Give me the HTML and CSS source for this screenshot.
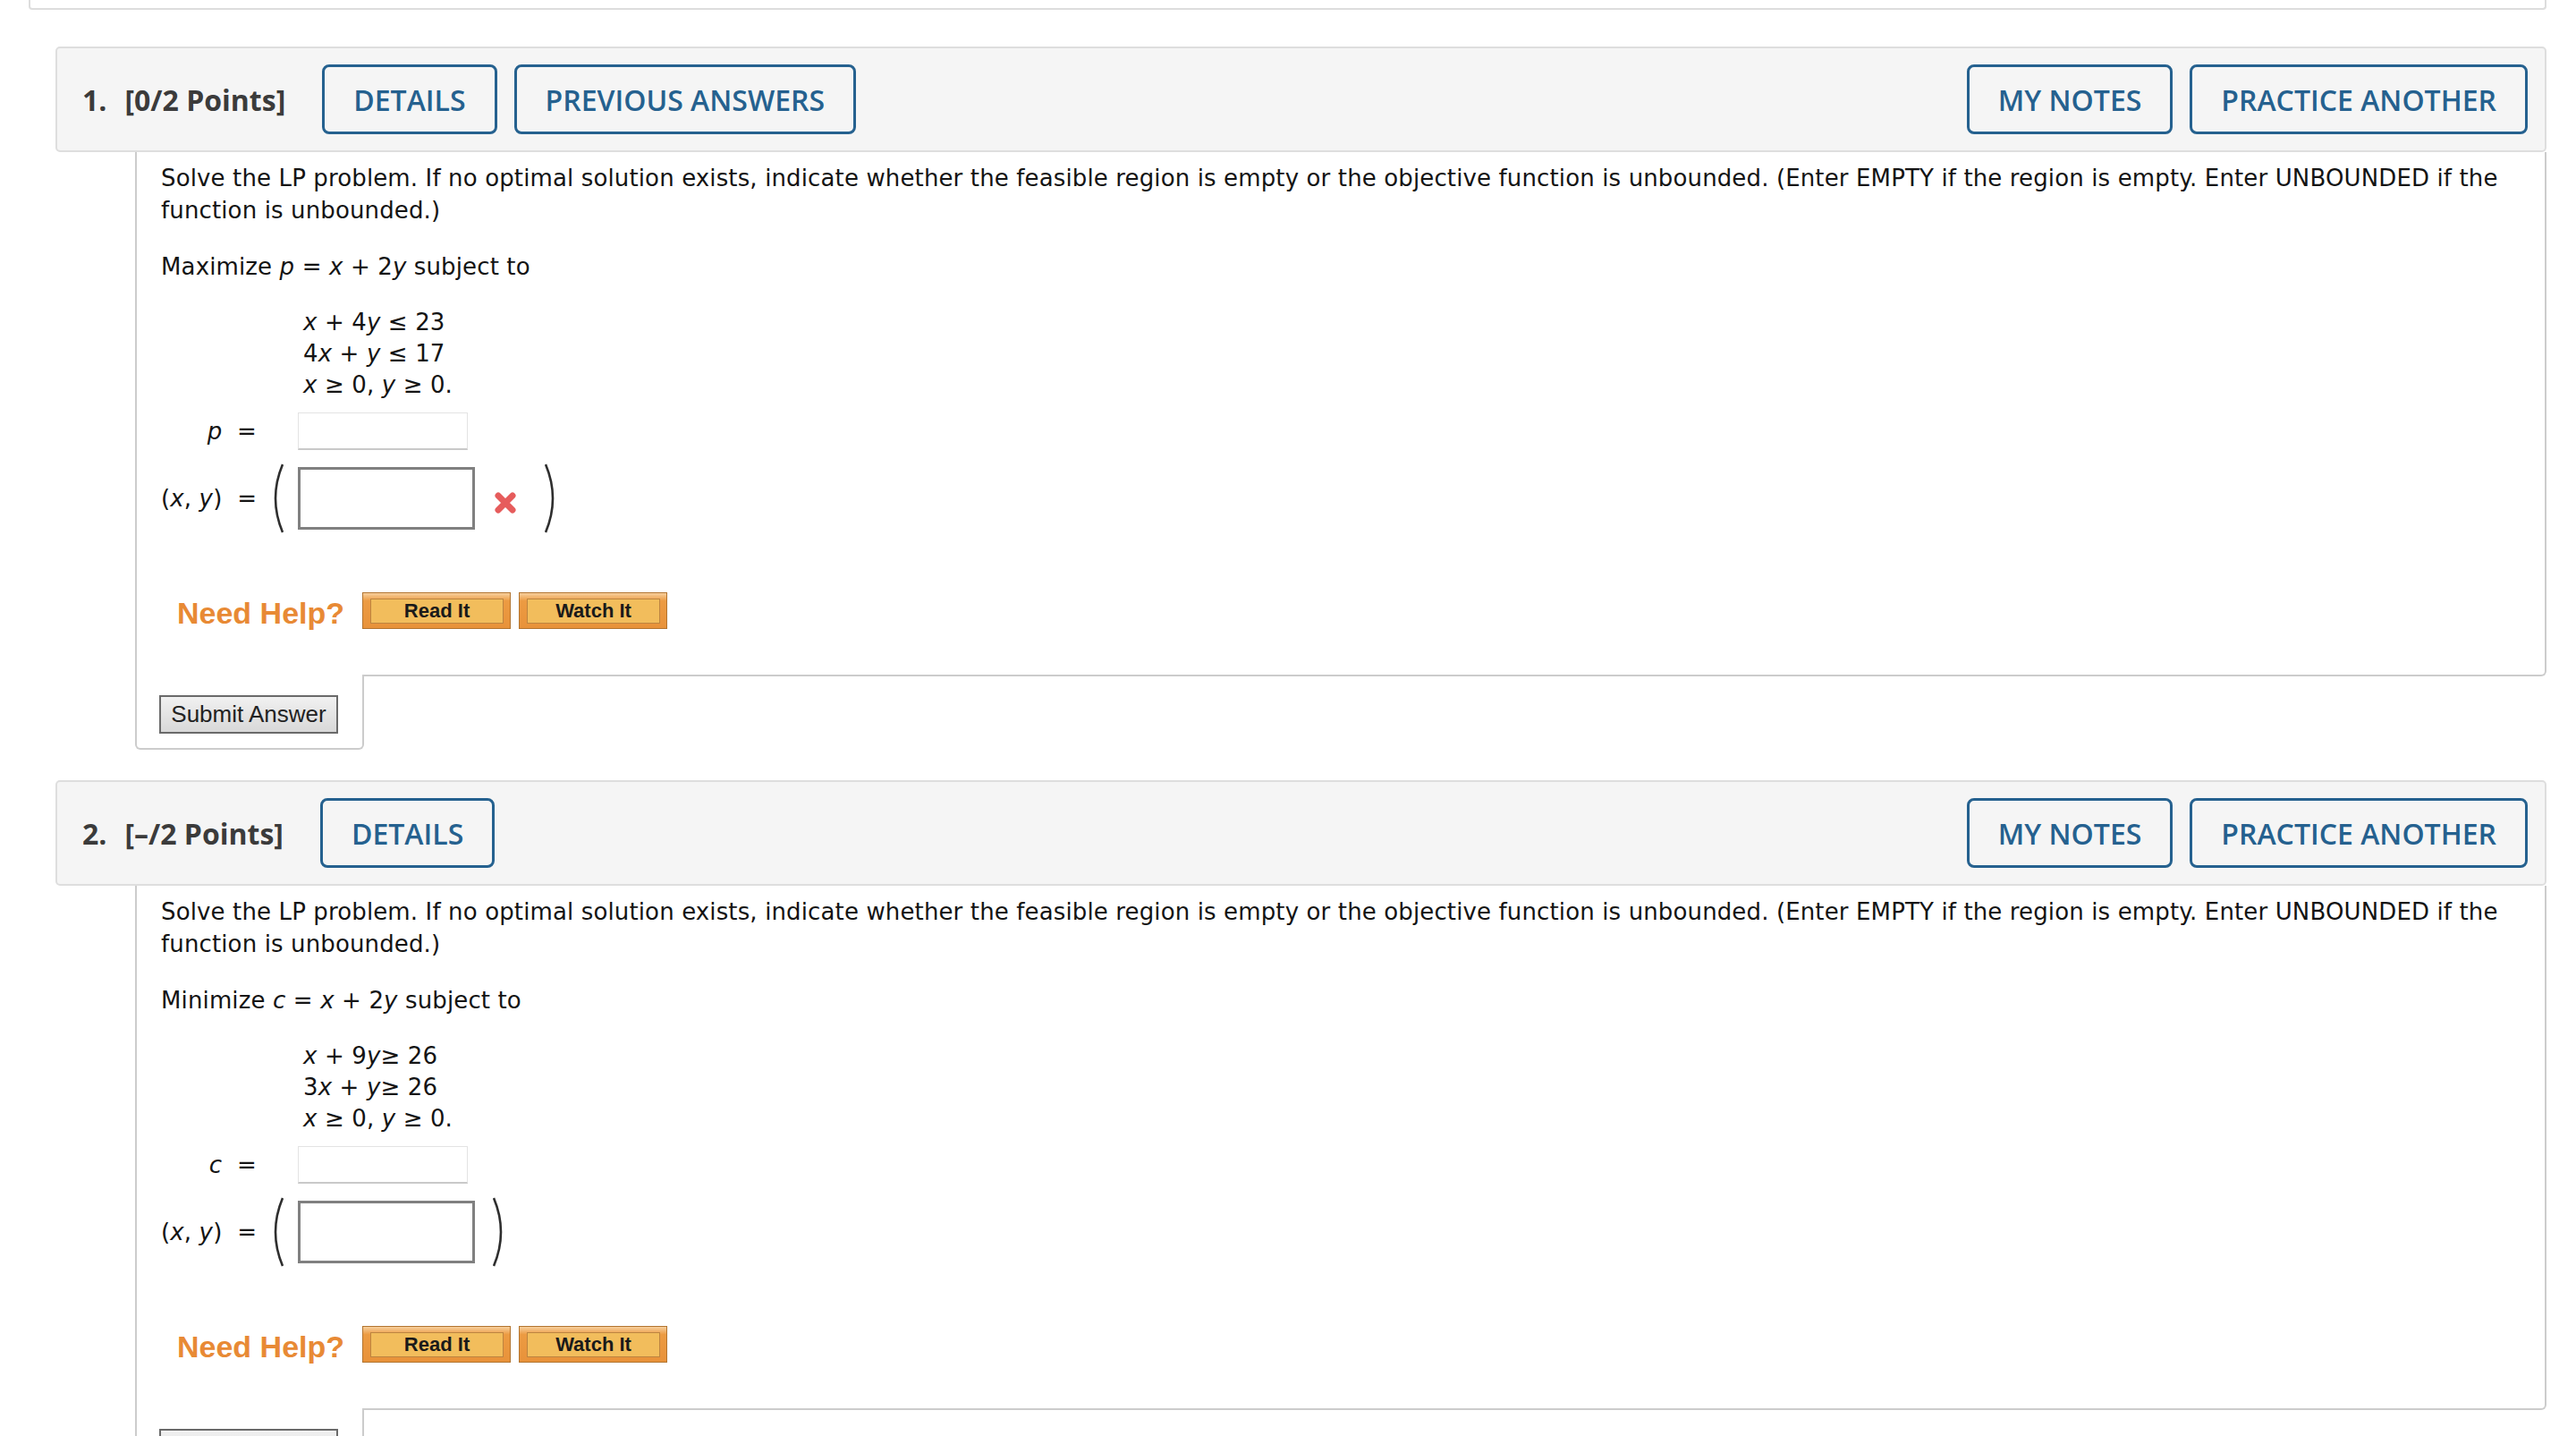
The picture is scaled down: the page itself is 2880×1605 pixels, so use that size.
FILE: index.html
```html
<!DOCTYPE html>
<html lang="en">
<head>
<meta charset="utf-8">
<title>Assignment</title>
<link rel="stylesheet" href="styles.css">
</head>
<body>
<div class="prev"></div>

<section class="question">
  <div class="q-head">
    <div class="q-side">
      <span class="q-num">1.</span>
      <span class="q-pts">[0/2 Points]</span>
      <button class="hbtn">DETAILS</button>
      <button class="hbtn">PREVIOUS ANSWERS</button>
    </div>
    <div class="q-side">
      <button class="hbtn">MY NOTES</button>
      <button class="hbtn">PRACTICE ANOTHER</button>
    </div>
  </div>
  <div class="q-body">
    <p class="prompt">Solve the LP problem. If no optimal solution exists, indicate whether the feasible region is empty or the objective function is unbounded. (Enter EMPTY if the region is empty. Enter UNBOUNDED if the<br>function is unbounded.)</p>
    <p class="prompt">Maximize <i>p</i> = <i>x</i> + 2<i>y</i> subject to</p>
    <div class="constraints">
      <div><i>x</i> + 4<i>y</i> ≤ 23</div>
      <div>4<i>x</i> + <i>y</i> ≤ 17</div>
      <div><i>x</i> ≥ 0, <i>y</i> ≥ 0.</div>
    </div>
    <div class="answers">
      <div class="arow">
        <span class="alabel"><i>p</i>&nbsp; =</span>
        <span class="pslot"></span>
        <input class="ibox ibox-light" type="text" aria-label="p">
      </div>
      <div class="arow">
        <span class="alabel">(<i>x</i>, <i>y</i>)&nbsp; =</span>
        <span class="pslot"><svg class="paren" viewBox="0 0 16 78" width="16" height="78"><path d="M15 1 Q-1 39 15 77" /></svg></span>
        <input class="ibox ibox-dark" type="text" aria-label="(x, y)">
        <svg class="xmark" viewBox="0 0 28 26" width="28" height="26"><path d="M6 5 L22 21 M22 5 L6 21" /></svg>
        <svg class="paren paren-close wide" viewBox="0 0 16 78" width="16" height="78"><path d="M1 1 Q17 39 1 77" /></svg>
      </div>
    </div>
    <div class="help">
      <span class="need">Need Help?</span>
      <button class="hb"><span>Read It</span></button>
      <button class="hb"><span>Watch It</span></button>
    </div>
  </div>
  <div class="q-tab"><button class="submit">Submit Answer</button></div>
</section>

<section class="question">
  <div class="q-head">
    <div class="q-side">
      <span class="q-num">2.</span>
      <span class="q-pts">[–/2 Points]</span>
      <button class="hbtn">DETAILS</button>
    </div>
    <div class="q-side">
      <button class="hbtn">MY NOTES</button>
      <button class="hbtn">PRACTICE ANOTHER</button>
    </div>
  </div>
  <div class="q-body">
    <p class="prompt">Solve the LP problem. If no optimal solution exists, indicate whether the feasible region is empty or the objective function is unbounded. (Enter EMPTY if the region is empty. Enter UNBOUNDED if the<br>function is unbounded.)</p>
    <p class="prompt">Minimize <i>c</i> = <i>x</i> + 2<i>y</i> subject to</p>
    <div class="constraints">
      <div><i>x</i> + 9<i>y</i>≥ 26</div>
      <div>3<i>x</i> + <i>y</i>≥ 26</div>
      <div><i>x</i> ≥ 0, <i>y</i> ≥ 0.</div>
    </div>
    <div class="answers">
      <div class="arow">
        <span class="alabel"><i>c</i>&nbsp; =</span>
        <span class="pslot"></span>
        <input class="ibox ibox-light" type="text" aria-label="c">
      </div>
      <div class="arow">
        <span class="alabel">(<i>x</i>, <i>y</i>)&nbsp; =</span>
        <span class="pslot"><svg class="paren" viewBox="0 0 16 78" width="16" height="78"><path d="M15 1 Q-1 39 15 77" /></svg></span>
        <input class="ibox ibox-dark" type="text" aria-label="(x, y)">
        <svg class="paren paren-close" viewBox="0 0 16 78" width="16" height="78"><path d="M1 1 Q17 39 1 77" /></svg>
      </div>
    </div>
    <div class="help">
      <span class="need">Need Help?</span>
      <button class="hb"><span>Read It</span></button>
      <button class="hb"><span>Watch It</span></button>
    </div>
  </div>
  <div class="q-tab"><button class="submit">Submit Answer</button></div>
</section>
</body>
</html>
```

FILE: styles.css
```css
html, body {
  margin: 0;
  padding: 0;
  background: #ffffff;
}

body {
  font-family: "DejaVu Sans", Verdana, sans-serif;
  color: #141414;
}

.prev {
  height: 9px;
  margin: 0 33px 0 32px;
  border: 2px solid #dddddd;
  border-top: 0;
  border-radius: 0 0 4px 4px;
}

.question {
  margin: 41px 33px 0 62px;
}

.question + .question {
  margin-top: 34px;
}

.q-head {
  box-sizing: border-box;
  height: 118px;
  background: #f5f5f5;
  border: 2px solid #dedede;
  border-radius: 5px;
  display: flex;
  align-items: center;
  justify-content: space-between;
  padding: 0 19px 0 28px;
}

.q-side {
  display: flex;
  align-items: center;
  gap: 19px;
}

.q-num,
.q-pts {
  font-family: "Open Sans", "Liberation Sans", sans-serif;
  font-weight: 700;
  font-size: 32px;
  color: #3b3b3b;
}

.q-num {
  margin-right: 1px;
}

.q-pts {
  margin-right: 22px;
}

.hbtn {
  box-sizing: border-box;
  height: 78px;
  padding: 0 32px;
  background: transparent;
  border: 3px solid #25618f;
  border-radius: 8px;
  color: #25618f;
  font-family: "Open Sans", "Liberation Sans", sans-serif;
  font-weight: 600;
  font-size: 32px;
}

.q-body {
  margin-left: 89px;
  border: 2px solid #cccccc;
  border-top: 0;
  border-radius: 0 0 6px 0;
  padding: 11px 27px 51px 27px;
  font-size: 26px;
  line-height: 36px;
  letter-spacing: 0.13px;
}

.prompt {
  margin: 0 0 27px 0;
}

.constraints {
  margin: 0 0 13px 159px;
  line-height: 35px;
}

.answers {
  display: flex;
  flex-direction: column;
  gap: 15px;
}

.arow {
  display: flex;
  align-items: center;
}

.alabel {
  width: 107px;
  text-align: right;
  white-space: nowrap;
}

.pslot {
  box-sizing: border-box;
  width: 46px;
  padding-left: 14px;
  display: flex;
  align-items: center;
}

.paren path {
  fill: none;
  stroke: #2e2e2e;
  stroke-width: 2.6;
}

.paren-close {
  margin-left: 20px;
}

.paren-close.wide {
  margin-left: 30px;
}

.ibox {
  box-sizing: border-box;
  margin: 0;
  padding: 0;
  background: #ffffff;
  outline: none;
}

.ibox-light {
  width: 190px;
  height: 42px;
  border: 1px solid #e3e3e3;
  border-bottom: 2px solid #c9c9c9;
}

.ibox-dark {
  width: 198px;
  height: 70px;
  border: 3px solid #808080;
}

.xmark {
  margin-left: 20px;
  margin-top: 10px;
}

.xmark path {
  fill: none;
  stroke: #e65c5c;
  stroke-width: 7;
  stroke-linecap: round;
}

.help {
  display: flex;
  align-items: flex-start;
  margin-top: 66px;
  padding-left: 18px;
}

.need {
  font-family: "Liberation Sans", Arial, sans-serif;
  font-weight: 700;
  font-size: 34px;
  color: #e88a35;
  margin-right: 20px;
  line-height: 36px;
  margin-top: 5px;
  letter-spacing: 0;
}

.hb {
  box-sizing: border-box;
  width: 166px;
  height: 41px;
  padding: 6px 7px 5px 8px;
  margin: 0 9px 0 0;
  border: 1px solid #b2742f;
  background: linear-gradient(#f7cf9c 0%, #ec9b42 22%, #e8923a 100%);
  display: flex;
}

.hb span {
  flex: 1;
  box-sizing: border-box;
  border: 1px solid #bd8440;
  background: #f2bd5c;
  font-family: "Liberation Sans", Arial, sans-serif;
  font-weight: 700;
  font-size: 22px;
  line-height: 26px;
  color: #1a1a1a;
  text-align: center;
  letter-spacing: 0;
}

.q-tab {
  box-sizing: border-box;
  width: 256px;
  margin: -2px 0 0 89px;
  padding: 23px 0 16px 25px;
  background: #ffffff;
  border: 2px solid #cccccc;
  border-top: 0;
  border-radius: 0 0 6px 6px;
  position: relative;
}

.submit {
  box-sizing: border-box;
  display: block;
  width: 200px;
  height: 43px;
  padding: 0;
  border: 2px solid #6a6a6a;
  border-radius: 0;
  background: linear-gradient(#f1f1f1, #d8d8d8);
  font-family: "Liberation Sans", Arial, sans-serif;
  font-size: 26px;
  color: #222222;
}
```
